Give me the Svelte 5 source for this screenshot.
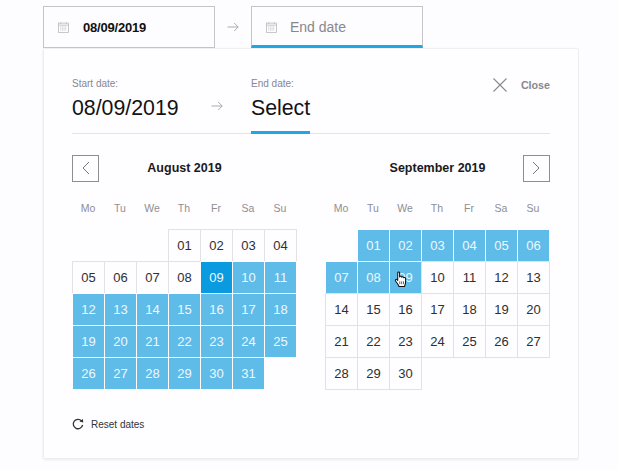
<script lang="ts">
  const weekdays = ['Mo', 'Tu', 'We', 'Th', 'Fr', 'Sa', 'Su'];
  const pad = (n: number) => String(n).padStart(2, '0');

  function range(n: number) {
    return Array.from({ length: n }, (_, i) => i + 1);
  }

  let august = { title: 'August 2019', offset: 3, days: range(31) };
  let september = { title: 'September 2019', offset: 1, days: range(30) };

  function augustState(d: number) {
    if (d === 9) return 'start';
    return d > 9 ? 'range' : '';
  }
  function septemberState(d: number) {
    return d <= 9 ? 'range' : '';
  }
</script>

{#snippet calIcon()}
  <svg class="cal-icon" width="11" height="11" viewBox="0 0 12 12" fill="none" stroke="#b5b5b8" stroke-width="0.8">
    <rect x="0.5" y="1.2" width="11" height="10.3" />
    <path d="M0.5 3.4H11.5M3 0.3V2M9 0.3V2" />
    <path d="M2.5 5.2H9.5M2.5 7H9.5M2.5 8.8H9.5" stroke-dasharray="1 0.8" />
  </svg>
{/snippet}

{#snippet arrow()}
  <svg class="arrow" width="12" height="10" viewBox="0 0 12 10" fill="none" stroke="#a3a3a6" stroke-width="0.9">
    <path d="M0.5 5H11.2M7.2 1L11.2 5L7.2 9" />
  </svg>
{/snippet}

{#snippet month(m, stateOf)}
  <div class="weekdays">
    {#each weekdays as w}
      <span>{w}</span>
    {/each}
  </div>
  <div class="grid">
    {#each { length: m.offset } as _}
      <span class="blank"></span>
    {/each}
    {#each m.days as d}
      <span class="day {stateOf(d)}">
        {pad(d)}
        {#if m.title.startsWith('Sep') && d === 9}
          <svg class="hand" width="14" height="17" viewBox="0 0 15 18">
            <path d="M4 1.8C4 .6 6 .6 6 1.8V6.2C6.2 5.4 8 5.3 8.2 6.6C8.5 5.8 10.2 5.9 10.3 7.2C10.7 6.6 12.4 6.8 12.4 8.2V12C12.4 14 11.6 15 11.2 16.5H5.4C4.8 14.6 3.4 13.2 1.8 10.8C.8 9.4 2.2 8 3.4 9.2L4 10Z" fill="#fff" stroke="#111" stroke-width="1.1" stroke-linejoin="round" />
            <path d="M6.2 11V14M8.2 11V14M10.2 11V14" stroke="#333" stroke-width="0.8" />
          </svg>
        {/if}
      </span>
    {/each}
  </div>
{/snippet}

<div class="page">
  <div class="inputs">
    <div class="input">
      {@render calIcon()}
      <span class="input-value">08/09/2019</span>
    </div>
    <div class="input-arrow">{@render arrow()}</div>
    <div class="input active">
      {@render calIcon()}
      <span class="input-placeholder">End date</span>
    </div>
  </div>

  <div class="panel">
    <div class="summary">
      <div class="field start">
        <span class="label">Start date:</span>
        <span class="value">08/09/2019</span>
      </div>
      <div class="summary-arrow">{@render arrow()}</div>
      <div class="field end">
        <span class="label">End date:</span>
        <span class="value">Select</span>
      </div>
      <button class="close">
        <svg width="14" height="14" viewBox="0 0 14 14" fill="none" stroke="#8a8a8e" stroke-width="1.1">
          <path d="M.5 .5L13.5 13.5M13.5 .5L.5 13.5" />
        </svg>
        <span>Close</span>
      </button>
    </div>

    <div class="months">
      <div class="month">
        <div class="month-head">
          <button class="nav" aria-label="Previous month">
            <svg width="8" height="14" viewBox="0 0 8 14" fill="none" stroke="#77777b" stroke-width="1">
              <path d="M7 1L1 7L7 13" />
            </svg>
          </button>
          <span class="month-title">{august.title}</span>
          <span class="nav-gap"></span>
        </div>
        {@render month(august, augustState)}
      </div>
      <div class="month">
        <div class="month-head">
          <span class="nav-gap"></span>
          <span class="month-title">{september.title}</span>
          <button class="nav" aria-label="Next month">
            <svg width="8" height="14" viewBox="0 0 8 14" fill="none" stroke="#77777b" stroke-width="1">
              <path d="M1 1L7 7L1 13" />
            </svg>
          </button>
        </div>
        {@render month(september, septemberState)}
      </div>
    </div>

    <div class="reset">
      <svg width="12" height="12" viewBox="0 0 12 12" fill="none">
        <path d="M9.6 3A4.7 4.7 0 1 0 10.6 7" stroke="#333" stroke-width="1.3" />
        <path d="M7.4 3.6L11.2 4.6L11 .9Z" fill="#333" />
      </svg>
      <span>Reset dates</span>
    </div>
  </div>
</div>

<style>
  :global(body) {
    margin: 0;
    background: #fdfcfe;
    font-family: "Liberation Sans", Arial, sans-serif;
  }

  .page {
    width: 536px;
    height: 470px;
    padding: 6px 0 0 43px;
    overflow: hidden;
  }

  .inputs {
    display: flex;
    align-items: stretch;
    height: 42px;
  }

  .input {
    width: 172px;
    box-sizing: border-box;
    border: 1px solid #c4c3c7;
    display: flex;
    align-items: center;
    padding-left: 14px;
    background: #fdfcfe;
  }

  .input.active {
    border-bottom: 3px solid #1ea7e4;
    padding-top: 2px;
  }

  .input-value {
    margin-left: 14px;
    font-size: 13px;
    font-weight: 700;
    letter-spacing: -0.2px;
    color: #111;
  }

  .input-placeholder {
    margin-left: 13px;
    font-size: 14px;
    color: #88888c;
  }

  .input-arrow {
    width: 36px;
    display: flex;
    align-items: center;
    justify-content: center;
  }

  .panel {
    box-sizing: border-box;
    width: 536px;
    height: 411px;
    padding: 0 28px;
    background: #fefdff;
    border: 1px solid #ececef;
    border-top-color: #f0f0f2;
    border-radius: 2px;
    box-shadow: 0 1px 3px rgba(0, 0, 0, 0.07);
  }

  .summary {
    display: flex;
    height: 85px;
    box-sizing: border-box;
    border-bottom: 1px solid #e4e4e8;
    padding-top: 28px;
  }

  .field {
    display: flex;
    flex-direction: column;
    height: 56px;
    box-sizing: border-box;
  }

  .field.start {
    width: 139px;
  }

  .field.end {
    width: 59px;
    border-bottom: 3px solid #1ea7e4;
    margin-bottom: -1px;
    height: 57px;
  }

  .summary-arrow {
    width: 40px;
    padding-top: 20px;
  }

  .label {
    font-size: 10px;
    line-height: 13px;
    color: #88888c;
  }

  .value {
    margin-top: 5px;
    font-size: 21.3px;
    line-height: 27px;
    color: #121214;
    white-space: nowrap;
  }

  .close {
    margin-left: auto;
    align-self: flex-start;
    display: flex;
    align-items: center;
    gap: 14px;
    padding: 1px 0 0;
    border: 0;
    background: none;
    font: 700 10.7px "Liberation Sans", Arial, sans-serif;
    color: #88888c;
  }

  .months {
    display: flex;
    justify-content: space-between;
    padding-top: 21px;
  }

  .month {
    width: 225px;
  }

  .month-head {
    display: flex;
    align-items: center;
    justify-content: space-between;
    height: 26px;
  }

  .nav {
    width: 27px;
    height: 27px;
    box-sizing: border-box;
    display: flex;
    align-items: center;
    justify-content: center;
    padding: 0;
    background: none;
    border: 1px solid #8e8e92;
  }

  .nav-gap {
    width: 27px;
  }

  .month-title {
    font-size: 12.5px;
    font-weight: 700;
    color: #1a1a1c;
  }

  .weekdays {
    display: grid;
    grid-template-columns: repeat(7, 32px);
    margin-top: 21px;
    height: 27px;
    font-size: 10.5px;
    line-height: 13px;
    color: #8f8f93;
    text-align: center;
  }

  .grid {
    display: grid;
    grid-template-columns: repeat(7, 32px);
    grid-auto-rows: 32px;
    width: 225px;
    height: 160px;
  }

  /* cells are a pixel larger than their track, so neighbours share a border */
  .day {
    position: relative;
    box-sizing: border-box;
    width: 33px;
    height: 33px;
    display: flex;
    align-items: center;
    justify-content: center;
    font-size: 13px;
    color: #2f2f32;
    border: 1px solid #e2e2e4;
    background: #fefdff;
  }

  .day.range,
  .day.start {
    color: #eef8fd;
    border-color: #fefdff;
  }

  .day.range {
    background: #5fbbe8;
  }

  .day.start {
    background: #0a9ae0;
  }

  .hand {
    position: absolute;
    left: 4px;
    top: 9px;
  }

  .reset {
    display: flex;
    align-items: center;
    gap: 7px;
    margin-top: 29px;
    font-size: 10px;
    color: #333336;
  }
</style>
